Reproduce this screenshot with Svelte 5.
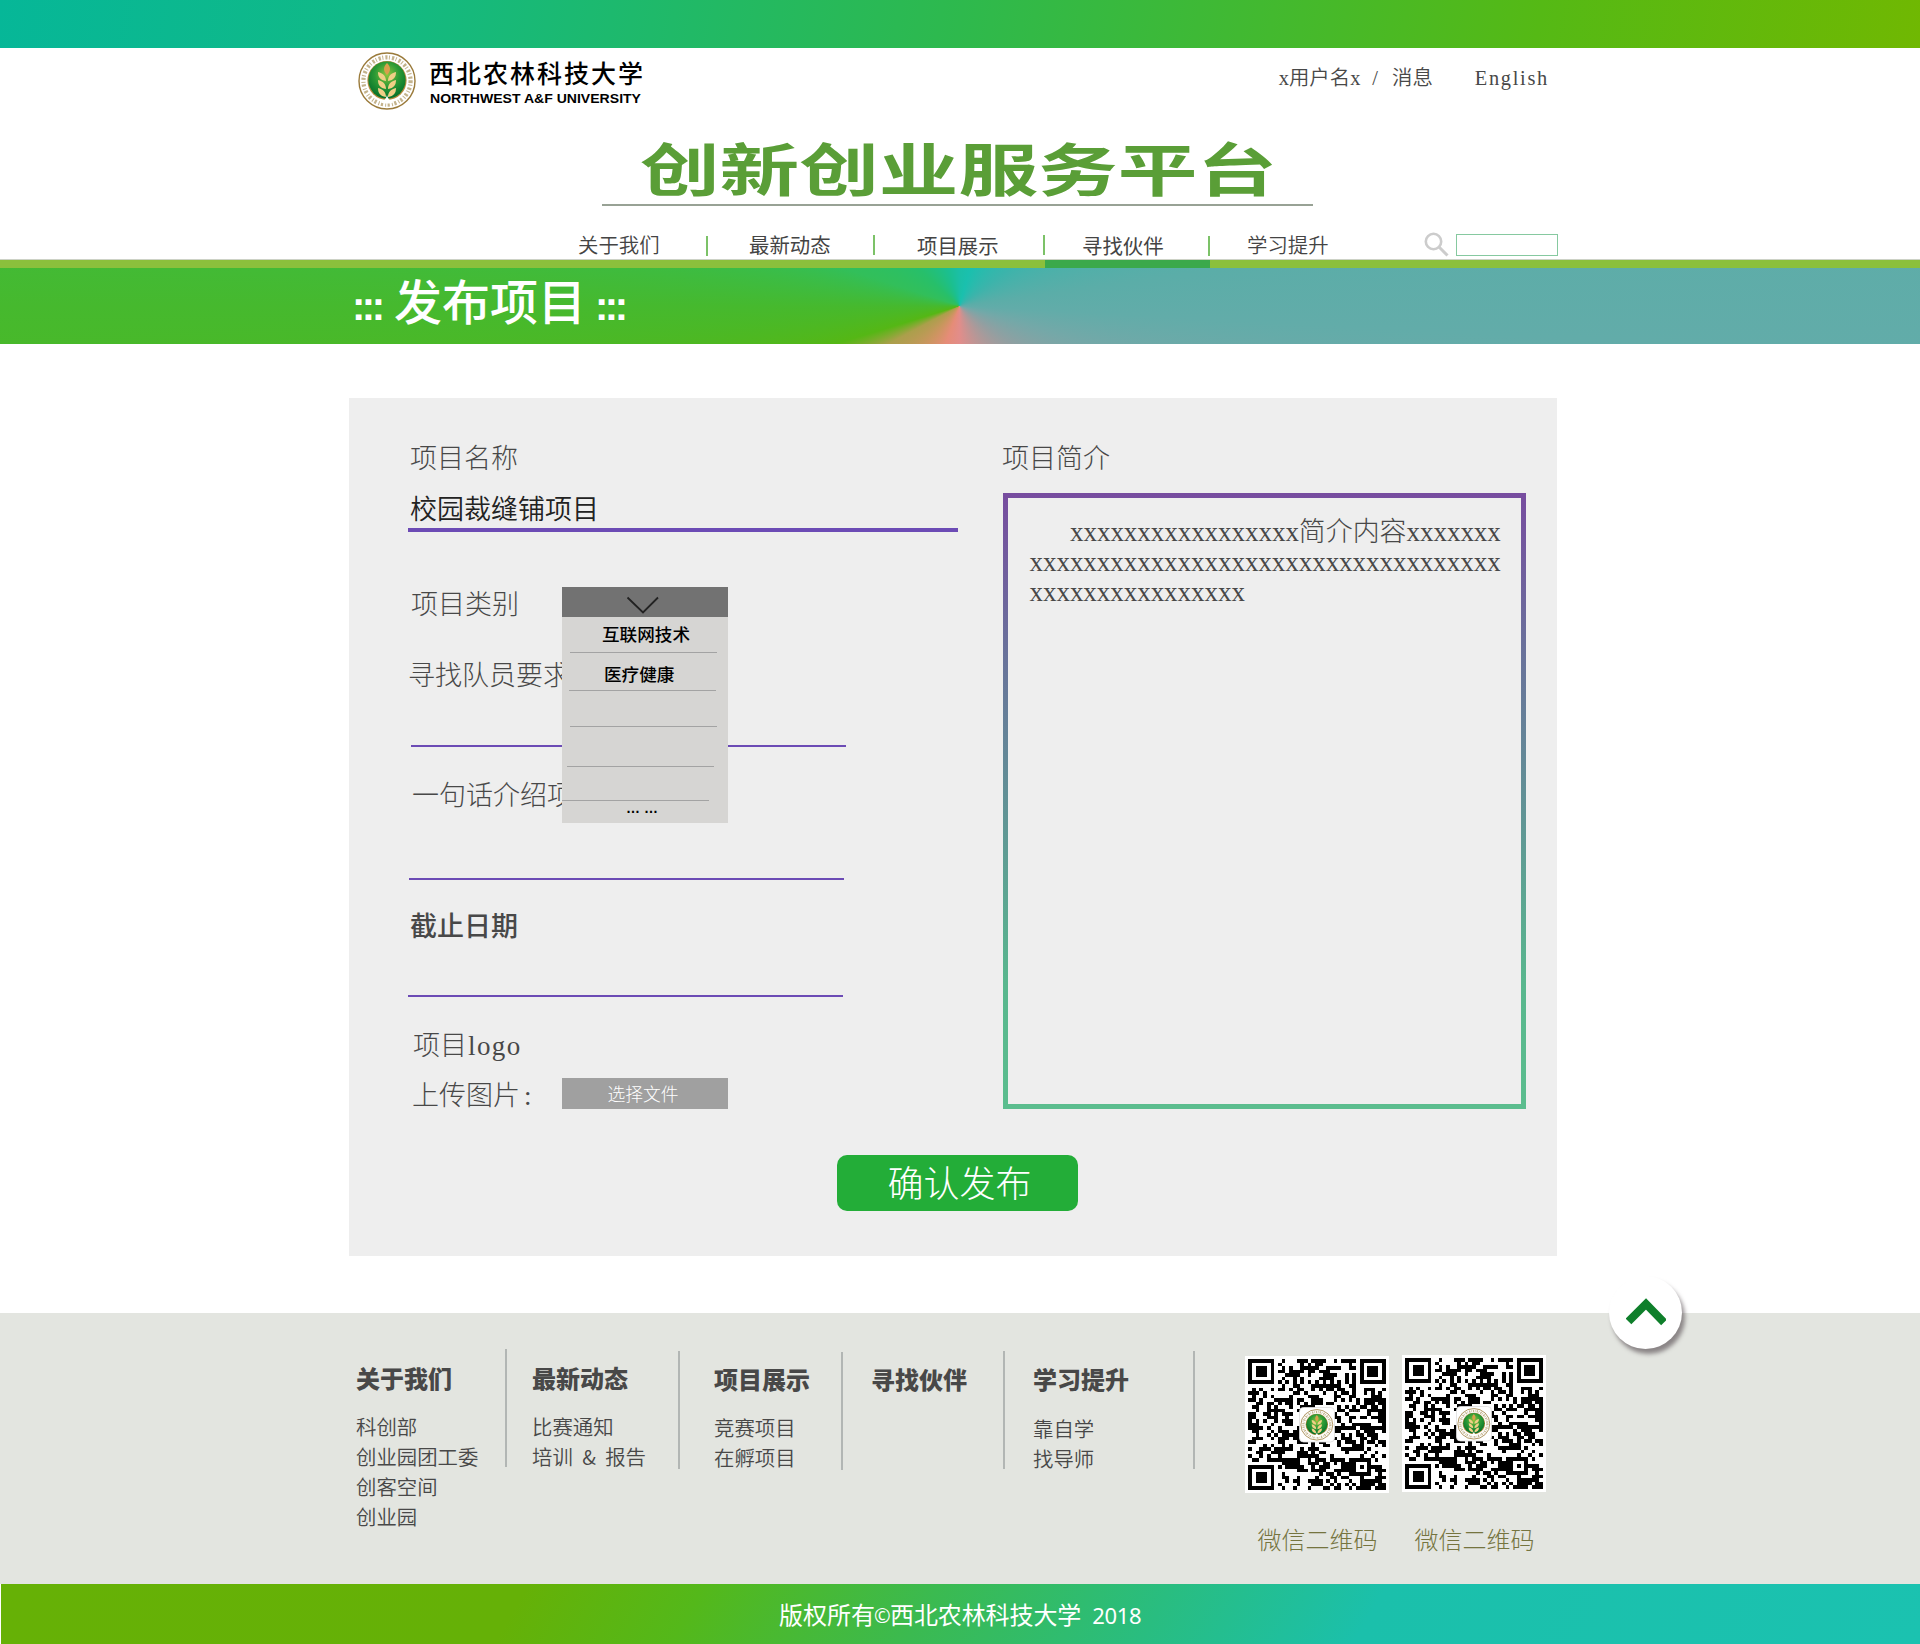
<script>
  const nav = [
    { text: '关于我们', cls: 'n1' },
    { text: '最新动态', cls: 'n2' },
    { text: '项目展示', cls: 'n3' },
    { text: '寻找伙伴', cls: 'n4' },
    { text: '学习提升', cls: 'n5' }
  ];

  const options = [
    { text: '互联网技术', cls: 'o1' },
    { text: '医疗健康', cls: 'o2' },
    { text: '', cls: 'o3' },
    { text: '', cls: 'o4' },
    { text: '', cls: 'o5' }
  ];

  const columns = [
    { title: '关于我们', links: ['科创部', '创业园团工委', '创客空间', '创业园'], cls: 'c1' },
    { title: '最新动态', links: ['比赛通知', '培训 & 报告'], cls: 'c2' },
    { title: '项目展示', links: ['竞赛项目', '在孵项目'], cls: 'c3' },
    { title: '寻找伙伴', links: [], cls: 'c4' },
    { title: '学习提升', links: ['靠自学', '找导师'], cls: 'c5' }
  ];

  // QR code: 37 x 37 modules, drawn as one path
  const N = 37;
  function ring(x, y, cx, cy, r) {
    const d = Math.max(Math.abs(x - cx), Math.abs(y - cy));
    return d > r ? null : r === 4 ? d === 3 || d <= 1 : d !== 1;
  }
  function buildQr() {
    let seed = 20187;
    let d = '';
    for (let y = 0; y < N; y++) {
      for (let x = 0; x < N; x++) {
        seed = (seed * 1103515245 + 12345) % 2147483648;
        let on = (seed >> 12) % 100 < 53;
        if (x === 6 || y === 6) on = (x + y) % 2 === 0;
        const marks = [
          ring(x, y, 3, 3, 4),
          ring(x, y, N - 4, 3, 4),
          ring(x, y, 3, N - 4, 4),
          ring(x, y, N - 7, N - 7, 2)
        ];
        for (const m of marks) if (m !== null) on = m;
        if (on) d += `M${x} ${y}h1v1h-1z`;
      }
    }
    return d;
  }
  const qr = buildQr();
</script>

{#snippet emblem()}
  <circle cx="29" cy="29" r="28" fill="#fff" stroke="#9a7a3a" stroke-width="1.4" />
  <circle cx="29" cy="29" r="23.6" fill="none" stroke="#a08545" stroke-width="4.2" stroke-dasharray="2.2 1.5 1 2.1" opacity=".62" />
  <circle cx="29" cy="28.5" r="19.6" fill="#b48a3c" />
  <circle cx="29" cy="28" r="18.6" fill="url(#leafGlow)" />
  <path d="M22 50c4-1 6-3 7-7 1 4 3 6 7 7-4 2-10 2-14 0z" fill="#fff" />
  <g fill="#f0cf86">
    <path d="M29 11c4 4 4 8 0 12-4-4-4-8 0-12z" fill="#d9a04c" />
    <path d="M28 29c-6-1-8-4-8-9 5 1 8 4 8 9zM30 29c6-1 8-4 8-9-5 1-8 4-8 9z" />
    <path d="M28 37c-6-1-8-4-8-9 5 1 8 4 8 9zM30 37c6-1 8-4 8-9-5 1-8 4-8 9z" />
    <path d="M28 45c-6-1-8-4-8-9 5 1 8 4 8 9zM30 45c6-1 8-4 8-9-5 1-8 4-8 9z" />
  </g>
{/snippet}

<div class="page">
  <div class="topbar"></div>

  <header>
    <div class="brandrow">
      <svg class="logo" width="290" height="60" viewBox="0 0 290 60">
        <defs>
          <radialGradient id="leafGlow" cx=".5" cy=".35" r=".65">
            <stop offset="0" stop-color="#8fc63d" />
            <stop offset=".5" stop-color="#2c9a35" />
            <stop offset="1" stop-color="#04702a" />
          </radialGradient>
        </defs>
        {@render emblem()}
        <text class="logo-cn" x="71" y="31" textLength="214">西北农林科技大学</text>
        <text class="logo-en" x="72" y="51" textLength="211" lengthAdjust="spacingAndGlyphs">NORTHWEST A&amp;F UNIVERSITY</text>
      </svg>
      <div class="user">
        <span>x用户名x</span><span class="slash">/</span><span>消息</span><span class="lang">English</span>
      </div>
    </div>

    <div class="title">
      <svg width="711" height="67" viewBox="0 0 711 67">
        <text x="38" y="54" textLength="637" lengthAdjust="spacingAndGlyphs">创新创业服务平台</text>
      </svg>
    </div>

    <nav>
      {#each nav as item}
        <a class={item.cls} href="#top">{item.text}</a>
      {/each}
      <svg class="search" width="25" height="25" viewBox="0 0 25 25">
        <circle cx="9.5" cy="9.5" r="7.7" fill="none" stroke="#ccc" stroke-width="2.6" />
        <path d="M15 15l8.5 8.5" stroke="#ccc" stroke-width="3" />
      </svg>
      <div class="searchbox"></div>
    </nav>
    <div class="strip"><div class="active"></div></div>
  </header>

  <div class="banner">
    <span class="dots">:::</span><span class="btxt">发布项目</span><span class="dots">:::</span>
  </div>

  <main>
    <section class="left">
      <div class="label name">项目名称</div>
      <div class="value">校园裁缝铺项目</div>
      <div class="category">
        <div class="label">项目类别</div>
        <div class="dropdown">
          <div class="toggle">
            <svg width="34" height="18" viewBox="0 0 34 18"><path d="M1.5 1.5L17 16.5L32 1.5" fill="none" stroke="#222" stroke-width="1.8" /></svg>
          </div>
          {#each options as o}
            <div class="option {o.cls}">{o.text}</div>
          {/each}
          <div class="more">… …</div>
        </div>
      </div>
      <div class="label members">寻找队员要求</div>
      <div class="rule r1"></div>
      <div class="label intro">一句话介绍项目</div>
      <div class="rule r2"></div>
      <div class="label deadline">截止日期</div>
      <div class="rule r3"></div>
      <div class="label plogo">项目<span class="latin">logo</span></div>
      <div class="upload">
        <span class="label">上传图片<span class="colon">:</span></span>
        <button class="file">选择文件</button>
      </div>
    </section>

    <section class="right">
      <div class="label">项目简介</div>
      <div class="textarea">
        <div class="first">{'x'.repeat(17)}<span class="cjk">简介内容</span>{'x'.repeat(7)}</div>
        <div>{'x'.repeat(35)}</div>
        <div>{'x'.repeat(16)}</div>
      </div>
    </section>

    <button class="submit">确认发布</button>
  </main>

  <footer>
    <div class="cols">
      {#each columns as c}
        <div class="col {c.cls}">
          <h3>{c.title}</h3>
          {#each c.links as l}
            <div class="link">{l}</div>
          {/each}
        </div>
        <div class="sep s{c.cls}"></div>
      {/each}
    </div>
    {#each ['q1', 'q2'] as q}
      <div class="qr {q}">
        <svg width="144" height="137" viewBox="0 0 144 137">
          <rect width="144" height="137" fill="#fff" />
          <path d={qr} transform="translate(3.2 3.3) scale(3.72 3.525)" fill="#000" shape-rendering="crispEdges" />
          <rect x="54.5" y="51.5" width="35" height="34.5" rx="4" fill="#fff" stroke="#ddd" stroke-width=".8" />
          <g transform="translate(55.3 53) scale(.57 .545)">{@render emblem()}</g>
        </svg>
        <div class="caption">微信二维码</div>
      </div>
    {/each}
    <div class="totop">
      <svg width="40" height="30" viewBox="0 0 40 30"><path d="M2.5 23.5L20 6L38 24.5" fill="none" stroke="#0f7f2b" stroke-width="8" /></svg>
    </div>
  </footer>

  <div class="copyright">
    <span>版权所有</span><span class="mark">©</span><span class="school">西北农林科技大学</span><span class="year">2018</span>
  </div>
</div>

<style>
  :global(body) {
    margin: 0;
    background: #fff;
  }
  .page,
  .page * {
    box-sizing: border-box;
  }
  .page {
    width: 1920px;
    height: 1644px;
    overflow: hidden;
    font-family: 'Noto Sans CJK SC', sans-serif;
    font-weight: 300;
    color: #484848;
  }
  button {
    border: 0;
    padding: 0;
    font: inherit;
    display: block;
  }
  .topbar {
    height: 48px;
    background: linear-gradient(100deg, #06b798 0%, #10b987 18%, #2eb94d 50%, #55b915 80%, #70b802 100%);
  }
  header {
    height: 220px;
    display: flex;
    flex-direction: column;
  }
  .brandrow {
    height: 89px;
    display: flex;
    justify-content: space-between;
    padding: 5px 371px 0 358px;
  }
  .logo {
    margin-top: -1px;
  }
  .logo-cn {
    font-size: 25px;
    font-weight: 500;
    fill: #000;
  }
  .logo-en {
    font: bold 13.5px 'Liberation Sans', Arial, sans-serif;
    fill: #000;
  }
  .user {
    display: flex;
    font-family: 'Liberation Serif', 'Noto Sans CJK SC', serif;
    font-size: 20.4px;
    font-weight: 350;
    line-height: 30px;
    padding-top: 10px;
    white-space: nowrap;
  }
  .slash {
    margin: 0 14px 0 12px;
  }
  .lang {
    margin-left: 42px;
    letter-spacing: 1.7px;
  }
  .title {
    width: 711px;
    height: 69px;
    margin-left: 602px;
    border-bottom: 2px solid #98a295;
  }
  .title svg {
    display: block;
    overflow: visible;
  }
  .title text {
    font-size: 57px;
    font-weight: 700;
    fill: #5a9e37;
  }
  nav {
    height: 54px;
    border-bottom: 1px solid #cdd2c6;
    padding: 24px 0 0 578px;
    display: flex;
    align-items: flex-start;
    font-size: 20.4px;
    font-weight: 350;
    line-height: 29px;
  }
  nav a {
    color: #444;
    text-decoration: none;
    height: 29px;
    white-space: nowrap;
    background: linear-gradient(#7cc268, #7cc268) no-repeat right 6px / 2px 20px;
    flex: none;
  }
  .n1 { width: 130px; }
  .n2 { width: 167px; padding-left: 41px; background-position-y: 5px; }
  .n3 { width: 170px; padding-left: 42px; line-height: 31px; background-position-y: 5px; }
  .n4 { width: 165px; padding-left: 37px; line-height: 31px; }
  nav .n5 { width: 214px; padding-left: 37px; background: none; }
  .n2, .n3, .n4 { font-weight: 400; }
  .search {
    flex: none;
    margin-top: 2px;
  }
  .searchbox {
    width: 102px;
    height: 22px;
    margin: 4px 0 0 7px;
    border: 1px solid #86c9a0;
  }
  .strip {
    height: 8px;
    background: #8bc03c;
  }
  .active {
    width: 165px;
    height: 8px;
    margin-left: 1045px;
    background: #3ba94b;
  }
  .banner {
    height: 76px;
    padding-left: 352px;
    display: flex;
    color: #fff;
    background: conic-gradient(from 0deg at 959.5px 38px, #1bbfa6 0deg, #1ac0ae 16deg, #3bb4ab 53deg, #5bada8 82deg, #62aca9 93deg, #74a8a8 106deg, #8fa0a2 125deg, #e28d8a 180deg, #e68c78 200deg, #cc9560 220deg, #ab9f4b 242deg, #55b715 253deg, #46b92e 270deg, #32bf5a 288deg, #27bf6a 312deg, #1bbf90 342deg, #1bbfa6 360deg);
  }
  .btxt {
    font-size: 48px;
    line-height: 62px;
    font-weight: 500;
    width: 194px;
  }
  .dots {
    font: bold 40px/77px 'Liberation Sans', Arial, sans-serif;
    letter-spacing: -3.5px;
    width: 42px;
  }
  .dots:last-child {
    margin-left: 7px;
  }
  main {
    width: 1208px;
    height: 858px;
    margin: 54px 0 0 349px;
    background: #eee;
    display: grid;
    grid-template: 757px 101px / 654px 554px;
  }
  .label {
    font-size: 27px;
    line-height: 32px;
    height: 30px;
    white-space: nowrap;
  }
  .left {
    padding: 43px 0 0 59px;
    display: flex;
    flex-direction: column;
  }
  .left .label {
    padding-left: 2px;
  }
  .left .name,
  .right .label {
    line-height: 31px;
  }
  .value {
    margin-top: 21px;
    width: 550px;
    height: 40px;
    padding-left: 2px;
    border-bottom: 4px solid #6c4bb5;
    font-size: 27px;
    line-height: 32px;
    font-weight: 350;
    color: #222;
  }
  .category {
    position: relative;
    margin-top: 55px;
  }
  .category .label {
    padding-left: 3px;
  }
  .dropdown {
    position: absolute;
    z-index: 2;
    left: 154px;
    top: 0;
    width: 166px;
    height: 236px;
    background: #d6d5d3;
    color: #000;
    font-size: 17.6px;
    font-weight: 500;
  }
  .toggle {
    height: 30px;
    background: #727272;
    padding: 9px 0 0 64px;
  }
  .toggle svg {
    display: block;
  }
  .option {
    width: 147px;
    border-bottom: 1px solid #a3a3a3;
    line-height: 20px;
  }
  .o1 { height: 36px; margin-left: 8px; padding: 7px 0 0 32px; }
  .o2 { height: 38px; margin-left: 7px; padding: 11px 0 0 35px; }
  .o3 { height: 36px; margin-left: 8px; }
  .o4 { height: 40px; margin-left: 5px; }
  .o5 { height: 34px; margin-left: 0; }
  .more {
    font: bold 14px/16px 'Liberation Sans', sans-serif;
    padding-left: 64px;
    margin-top: -1px;
  }
  .left .members { margin-top: 41px; padding-left: 0; }
  .rule {
    width: 435px;
    height: 2px;
    background: #6c4bb5;
  }
  .r1 { margin: 57px 0 0 3px; }
  .left .intro { margin-top: 31px; padding-left: 4px; }
  .r2 { margin: 70px 0 0 1px; }
  .deadline { margin-top: 29px; font-weight: 500; }
  .r3 { margin-top: 56px; }
  .left .plogo { margin-top: 32px; padding-left: 5px; line-height: 30px; }
  .latin {
    font-family: 'Liberation Serif', serif;
    letter-spacing: 1.4px;
    padding-left: 1px;
    line-height: 1;
  }
  .upload {
    margin-top: 19px;
    display: flex;
  }
  .upload .label {
    width: 154px;
    padding-left: 4px;
    line-height: 31px;
  }
  .colon {
    font-family: 'Liberation Serif', serif;
    padding-left: 4px;
    line-height: 1;
  }
  .file {
    width: 166px;
    height: 31px;
    background: #a0a0a0;
    color: #fff;
    font-size: 17.8px;
    line-height: 29px;
    padding-right: 4px;
    padding-bottom: 1px;
  }
  .right {
    padding-top: 43px;
  }
  .right .label {
    margin-left: -1px;
  }
  .textarea {
    width: 523px;
    height: 616px;
    margin-top: 22px;
    border: 5px solid;
    border-image: linear-gradient(#774c9f, #6a6f9b 24%, #5f9c94 58%, #59b78e 80%, #5bbd8e) 5;
    padding: 19px 0 0 21.5px;
    font: 26.93px/30px 'Liberation Serif', serif;
    white-space: nowrap;
  }
  .first {
    padding-left: 40.5px;
  }
  .cjk {
    font-family: 'Noto Sans CJK SC', sans-serif;
    font-weight: 300;
    line-height: 20px;
  }
  .submit {
    width: 241px;
    height: 56px;
    margin-left: 488px;
    background: #23ad38;
    border-radius: 10px;
    color: #fff;
    font-size: 36px;
    line-height: 48px;
    padding: 0 0 4px 4px;
  }
  footer {
    position: relative;
    height: 271px;
    margin-top: 57px;
    background: #e3e5e0;
    display: flex;
    padding-left: 356px;
  }
  .cols {
    display: flex;
    width: 889px;
    padding-top: 36px;
  }
  .col {
    padding-top: 15px;
  }
  .c1 { width: 149px; }
  .c2 { width: 171px; padding-left: 25px; }
  .c3 { width: 161px; padding: 16px 0 0 34px; }
  .c4 { width: 160px; padding: 16px 0 0 28px; }
  .c5 { width: 188px; padding: 16px 0 0 28px; }
  h3 {
    margin: 0 0 20px;
    font-size: 24px;
    line-height: 27px;
    font-weight: 900;
    white-space: nowrap;
  }
  .link {
    font-size: 20.4px;
    line-height: 30px;
    white-space: nowrap;
    font-weight: 350;
    word-spacing: 4.8px;
  }
  .c5 .link {
    position: relative;
    top: 1px;
  }
  .sep {
    width: 2px;
    height: 118px;
    margin-top: 2px;
    background: #b2b6b4;
  }
  .sc1 { margin-top: 0; }
  .sc3 { margin-top: 3px; }
  .qr {
    width: 157px;
    padding-top: 43px;
  }
  .q2 {
    padding-top: 42px;
  }
  .qr svg {
    display: block;
  }
  .caption {
    margin-top: 31px;
    padding-left: 12.5px;
    font-size: 24px;
    line-height: 30px;
    color: #75743f;
  }
  .q2 .caption {
    margin-top: 32px;
  }
  .totop {
    position: absolute;
    left: 1609px;
    top: -37px;
    width: 73px;
    height: 73px;
    border-radius: 50%;
    background: #fff;
    box-shadow: 3px 5px 4px rgba(80, 70, 75, 0.6);
    padding: 22px 0 0 17px;
  }
  .copyright {
    height: 60px;
    margin-left: 1px;
    padding-left: 778px;
    display: flex;
    color: #fff;
    font-size: 24px;
    line-height: 60px;
    font-weight: 400;
    background: linear-gradient(120deg, #66b106 0%, #65b107 27%, #54b81a 36%, #3bba50 48%, #29bd80 60%, #1bc0ab 71%, #1bc2b0 100%);
  }
  .mark {
    width: 16px;
    margin-left: -1px;
    font: 20px/63px 'Open Sans', sans-serif;
  }
  .school {
    letter-spacing: -0.1px;
  }
  .year {
    font: 22px/63px 'Noto Sans', sans-serif;
    letter-spacing: -0.3px;
    margin-left: 11px;
  }
</style>
